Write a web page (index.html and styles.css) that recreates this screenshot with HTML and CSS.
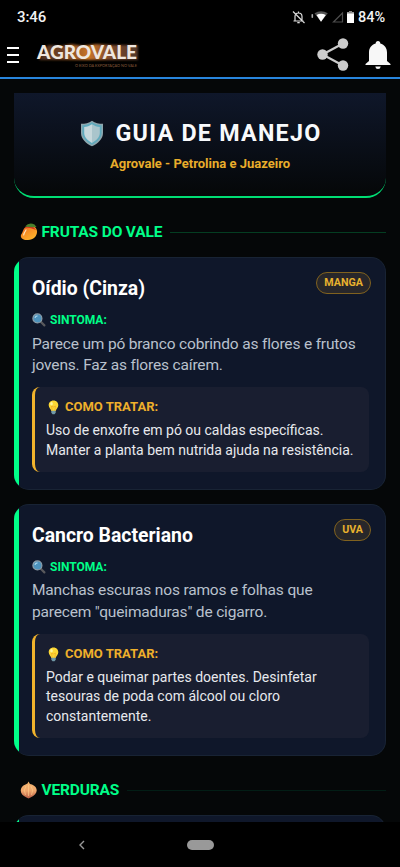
FILE: index.html
```html
<!DOCTYPE html>
<html lang="pt-BR">
<head>
<meta charset="utf-8">
<meta name="viewport" content="width=device-width, initial-scale=1">
<title>Agrovale - Guia de Manejo</title>
<link rel="stylesheet" href="styles.css">
</head>
<body>
<svg class="defs" width="0" height="0" aria-hidden="true">
  <defs>
    <linearGradient id="mangoFill" x1="0" y1="0" x2=".7" y2="1"><stop offset="0" stop-color="#d83a20"/><stop offset=".4" stop-color="#f78a24"/><stop offset="1" stop-color="#ffb52c"/></linearGradient>
    <linearGradient id="onionFill" x1="0" y1="0" x2="0" y2="1"><stop offset="0" stop-color="#f5b66f"/><stop offset=".55" stop-color="#efa66d"/><stop offset="1" stop-color="#b85c45"/></linearGradient>
    <linearGradient id="logoGlow"><stop offset="0" stop-color="#4b3022"/><stop offset=".25" stop-color="#754322"/><stop offset=".5" stop-color="#c97428"/><stop offset=".7" stop-color="#824b2d"/><stop offset="1" stop-color="#51382b"/></linearGradient>
    <filter id="soft" x="-10%" y="-30%" width="120%" height="160%"><feGaussianBlur stdDeviation="1"/></filter>
    <symbol id="lens" viewBox="0 0 14 14"><path d="M8.5 8.5L12.4 12.4" stroke="#59595c" stroke-width="2.2" stroke-linecap="round"/><circle cx="5.4" cy="5.4" r="4.5" fill="#4d93bd" stroke="#8e9faa" stroke-width="1.2"/><path d="M3 5Q3.3 3 5.5 2.8" fill="none" stroke="#a6d5ed" stroke-width="1.2"/></symbol>
    <symbol id="bulb" viewBox="0 0 12 15"><path d="M6 .5C3 .5 1.2 2.7 1.2 5.2c0 2.4 2 3.5 2.6 5.8h4.4c.6-2.3 2.6-3.4 2.6-5.8C10.800 2.700 9 .5 6 .5z" fill="#fdd835"/><path d="M4.700 11L4 6l2 1 2-1-.7 5" fill="none" stroke="#f19a20" stroke-width=".5"/><ellipse cx="4" cy="3.800" rx="1.300" ry="1.800" fill="#fff59d"/><path d="M3.800 10.800h4.400v2L7 14.300H5l-1.200-1.500z" fill="#7199a7"/></symbol>
  </defs>
</svg>
<div class="screen">
  <div class="status">
    <span class="clock">3:46</span>
    <svg class="status-icons" width="58" height="16" viewBox="0 0 58 16">
      <g fill="none" stroke="#ddd" stroke-width="1.200"><path d="M3 11.500V7.500Q3 4 6.500 4T10 7.500V11.500M1.500 12H11.500M6.500 2.500V4M1 2.500L12.500 14"/></g><path d="M5.300 13h2.400v1.300H5.300z" fill="#ddd"/>
      <rect x="19.500" y="5" width="1.600" height="4" rx=".8" fill="#aaa"/>
      <path d="M22.500 4.300Q29 .2 35.800 4.300L29 12.800z" fill="#555"/><path d="M24.500 6.100Q29 3.200 33.800 6.100L29 12.800z" fill="#fff"/>
      <path d="M41.500 13L50.500 4v9z" fill="none" stroke="#4d4d4d" stroke-width="1.200"/>
    </svg>
    <svg class="battery" width="7" height="12" viewBox="0 0 7 12"><path d="M2 0h3v1.200h2V12H0V1.200h2z" fill="#fff"/><path d="M2 0h3v1.200h2V2.500H0V1.200h2z" fill="#888"/></svg>
    <span class="percent">84%</span>
  </div>
  <header class="appbar">
    <div class="menu"><i></i><i></i><i></i></div>
    <svg class="logo" width="108" height="30" viewBox="0 0 108 30">
      <path d="M9 9L12 5 25 6 35 4 47 6 60 4 77 5H102V20H3z" fill="url(#logoGlow)" filter="url(#soft)"/>
      <text x="1" y="19.300" class="logo-name" textLength="100" lengthAdjust="spacingAndGlyphs">AGROVALE</text>
      <text x="39" y="26.500" class="logo-sub" textLength="62" lengthAdjust="spacingAndGlyphs">O EIXO DA EXPORTAÇÃO NO VALE</text>
    </svg>
    <svg class="share" width="32" height="34" viewBox="0 0 32 34"><path d="M26 6.500L5.500 17.500 26 28.500" fill="none" stroke="#ccc" stroke-width="2.200"/><g fill="#ccc"><circle cx="26" cy="6.500" r="5.200"/><circle cx="5.500" cy="17.500" r="5.200"/><circle cx="26" cy="28.500" r="5.200"/></g></svg>
    <svg class="bell" width="26" height="30" viewBox="0 0 26 30"><path d="M13 1c-1.500 0-2.300 1-2.300 2.500C6.500 4.600 4 8 4 12.500V21L.5 24v1h25v-1L22 21V12.500c0-4.500-2.500-7.900-6.700-9C15.300 2 14.500 1 13 1zM10.300 26.500h5.400q-.3 2.500-2.700 2.500t-2.700-2.500z" fill="#f7f7f7"/></svg>
  </header>
  <main>
    <section class="hero">
      <h1><svg width="24" height="27" viewBox="0 0 24 27"><path d="M12 .7C9 3 5 3.800 1 3.800V13c0 6 5 10.500 11 13.300C18 23.500 23 19 23 13V3.800C19 3.800 15 3 12 .7z" fill="#8fa7ae"/><path d="M12 2.200C9 4.300 5.800 5 2.400 5.200V13c0 5 4.500 9.300 9.600 11.800C17.100 22.300 21.600 18 21.600 13V5.200C18.200 5 15 4.300 12 2.200z" fill="#5faabd"/><path d="M12 4.300C9.500 6 7 6.700 4.200 7V13c0 4.200 3.800 7.800 7.800 10z" fill="#c7d8dc"/><path d="M12 4.300C14.500 6 17 6.700 19.800 7V13c0 4.200-3.800 7.800-7.800 10z" fill="#aac5cc"/></svg><span>GUIA DE MANEJO</span></h1>
      <p>Agrovale - Petrolina e Juazeiro</p>
    </section>
    <h2 class="category">
      <svg width="18" height="18" viewBox="0 0 18 18"><path d="M6 4C3 5.500 3.500 8 1.500 11-.5 14 2 17.500 8 17c6 0 9.500-4.500 9-9C16.500 3 10 1.500 6 4z" fill="url(#mangoFill)"/><path d="M5 4.500Q9 2 14 4.500L16 7Q10 4 5 4.500z" fill="#d9301e"/><path d="M5 3.500Q9-1 14.500 1.500L16.500 4Q11 4.500 5 3.500z" fill="#4b7f2c"/><path d="M6 7Q4 10 3.700 12" fill="none" stroke="#ffe6c4" stroke-width="1.200" stroke-linecap="round"/></svg>
      <span>FRUTAS DO VALE</span>
    </h2>
    <article class="card">
      <span class="tag">MANGA</span>
      <h3>Oídio (Cinza)</h3>
      <h4><svg width="14" height="14"><use href="#lens"/></svg>SINTOMA:</h4>
      <p class="symptom">Parece um pó branco cobrindo as flores e frutos<br>jovens. Faz as flores caírem.</p>
      <div class="treatment">
        <h4><svg width="15" height="15"><use href="#bulb"/></svg>COMO TRATAR:</h4>
        <p>Uso de enxofre em pó ou caldas específicas.<br>Manter a planta bem nutrida ajuda na resistência.</p>
      </div>
    </article>
    <article class="card">
      <span class="tag">UVA</span>
      <h3>Cancro Bacteriano</h3>
      <h4><svg width="14" height="14"><use href="#lens"/></svg>SINTOMA:</h4>
      <p class="symptom">Manchas escuras nos ramos e folhas que<br>parecem "queimaduras" de cigarro.</p>
      <div class="treatment">
        <h4><svg width="15" height="15"><use href="#bulb"/></svg>COMO TRATAR:</h4>
        <p>Podar e queimar partes doentes. Desinfetar<br>tesouras de poda com álcool ou cloro<br>constantemente.</p>
      </div>
    </article>
    <h2 class="category second">
      <svg width="18" height="18" viewBox="0 0 18 18"><path d="M8.500.5Q9 3 12 3.500c7 3 6 10-1.500 13L8.500 17.500l-2-1C-1 13.500-1 6 5.500 3.500Q8 2.800 8.500.5z" fill="url(#onionFill)"/><path d="M6 5Q3 9 5.500 14M8.500 4v11M11 5q3 4 .5 9" fill="none" stroke="#ffd08c" stroke-width=".6"/></svg>
      <span>VERDURAS</span>
    </h2>
    <article class="card"></article>
  </main>
  <nav class="navbar">
    <svg width="8" height="10" viewBox="0 0 8 10"><path d="M6 1L2 5l4 4" fill="none" stroke="#999" stroke-width="1.400"/></svg>
    <i></i>
  </nav>
</div>
</body>
</html>
```
FILE: styles.css
```css
* { box-sizing: border-box; margin: 0; padding: 0; }
body { background: #000; font-family: Roboto, "Liberation Sans", sans-serif; }
svg { display: block; flex: none; }
.defs { position: absolute; }
.screen { display: flex; flex-direction: column; width: 400px; height: 867px; overflow: hidden; }
.status { flex: none; display: flex; align-items: center; height: 34px; padding: 0 14px 0 17px; color: #f2f2f2; font-size: 15px; font-weight: 500; }
.clock { flex: 1; letter-spacing: -.1px; }
.status-icons { margin-right: -3px; }
.percent { margin-left: 4px; width: 28px; white-space: nowrap; font-size: 14.5px; }
.appbar { flex: none; display: flex; align-items: center; height: 45px; padding: 0 10px 4px 7px; border-bottom: 2px solid #2885dc; }
.menu { display: flex; flex-direction: column; gap: 5px; width: 12px; margin-top: 3px; }
.menu i { height: 2px; background: #fff; }
.logo { margin: 2px auto 0 17px; overflow: visible; }
.logo-name { fill: #eee6df; font: 900 18.5px Lato, sans-serif; }
.logo-sub { fill: #8a5c3c; font: 4.2px Lato, sans-serif; }
.share { margin-right: 16px; margin-top: 1px; }
.bell { margin-top: 2px; margin-right: -1px; }
main { flex: 1; min-height: 0; overflow: hidden; padding: 14px 14px 0; background: #050708; }
.hero { height: 105px; padding-top: 26px; text-align: center; border-bottom: 2px solid #00de74; border-radius: 0 0 20px 20px; background: linear-gradient(#0f172a, #050708); }
.hero h1 { display: flex; align-items: center; justify-content: center; gap: 11px; height: 28px; padding-left: 2px; color: #f8fafc; font-size: 23.3px; line-height: 28px; letter-spacing: 1.25px; white-space: nowrap; }
.hero p { margin-top: 7.500px; color: #e9ad2b; font-size: 13px; font-weight: 700; line-height: 18px; }
.category { display: flex; align-items: center; gap: 4px; height: 20px; margin: 24px 0 15px; padding-left: 5.500px; color: #00ff88; font-size: 15.5px; line-height: 20px; font-weight: 700; letter-spacing: -.15px; }
.category::after { content: ""; flex: 1; height: 1px; margin-left: 4px; background: #043d21; }
.category.second::after { background: #021d15; }
.card { position: relative; min-height: 100px; margin-bottom: 14px; padding: 19px 16px 17px 18px; border: 1px solid #182334; border-left: 0; border-radius: 15px; background: #0f172a; overflow: hidden; }
.card::before { content: ""; position: absolute; top: -1px; bottom: -1px; left: 0; width: 5px; background: #00ff88; }
.tag { position: absolute; top: 14px; right: 14px; height: 22px; padding: 0 7px; border: 1px solid #80621f; border-radius: 11px; background: #28272a; color: #e9b22e; font-size: 10.7px; font-weight: 700; line-height: 20px; }
.card h3 { color: #fff; font-size: 19.4px; line-height: 24px; }
.card h4 { display: flex; align-items: center; gap: 4px; height: 16px; margin-top: 11px; color: #00ff88; font-size: 12px; line-height: 16px; }
.symptom { margin-top: 5.500px; color: #b9c1cd; font-size: 15.5px; line-height: 21.300px; letter-spacing: -.17px; white-space: nowrap; }
.treatment { margin-top: 10.900px; padding: 12.500px 10px 11.500px 11px; border-left: 3px solid #f1b32c; border-radius: 8px; background: #191e30; }
.treatment h4 { margin: 0; color: #efb02b; font-size: 13px; }
.treatment p { margin-top: 5.400px; color: #e7e9ed; font-size: 14px; line-height: 19.700px; white-space: nowrap; }
.navbar { flex: none; display: flex; align-items: center; height: 45px; padding-left: 78px; background: #000; }
.navbar i { width: 27px; height: 10px; margin-left: 101px; border-radius: 5px; background: #999; }
```
